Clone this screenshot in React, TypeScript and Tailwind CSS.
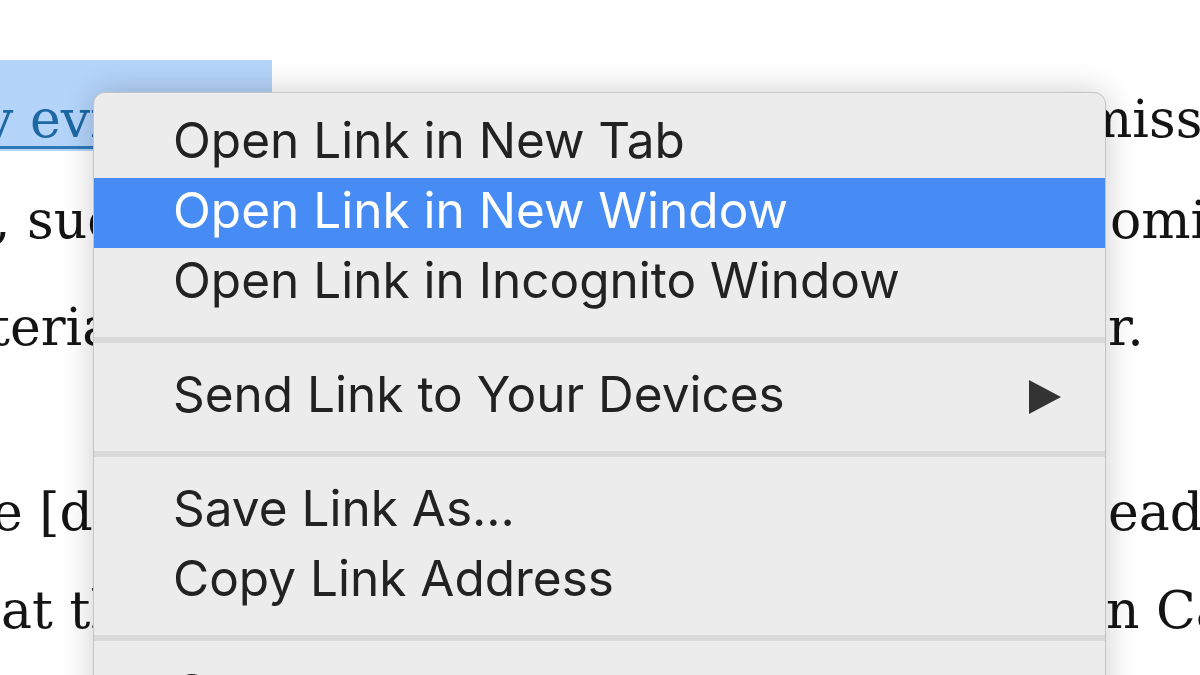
import React from 'react';

const serif = { fontFamily: '"DejaVu Serif", "Liberation Serif", serif' };

function MenuItem({ label, active, submenu }: { label: string; active?: boolean; submenu?: boolean }) {
  return (
    <div
      className={`flex h-[70px] items-center justify-between pb-[5px] pl-[79px] pr-[43px] ${
        active ? 'bg-[#478bf4] text-white' : 'text-[#222222]'
      }`}
    >
      <span className="whitespace-nowrap">{label}</span>
      {submenu && (
        <svg width="34" height="36" viewBox="0 0 34 36" className="mt-[5px]">
          <polygon points="1,1 33,18 1,35" fill="#333333" />
        </svg>
      )}
    </div>
  );
}

function Separator() {
  return <div className="my-[19px] h-[6px] bg-[#d9d9d9]" />;
}

export default function App() {
  return (
    <div className="relative h-[675px] w-[1200px] overflow-hidden bg-white">
      {/* article text behind the menu */}
      <div className="pt-[68px] text-[52px] leading-[102px] text-[#141414]" style={serif}>
        <div className="flex h-[101px] items-start whitespace-nowrap">
          <div className="-mt-[8px] flex h-[109px] w-[1106px] shrink-0 overflow-hidden">
            <div className="-ml-[16px] h-[91px] w-[288px] shrink-0 bg-[#b4d4fa] pt-[8px]">
              <span className="text-[#1c68a3] underline decoration-[#2f78b8] decoration-[3px] underline-offset-[9px]">
                y evil
              </span>
            </div>
            <span className="pt-[8px]">of the most recent</span>
          </div>
          <span className="-ml-[23px]">mission</span>
        </div>
        <div className="flex h-[107px] items-start whitespace-nowrap">
          <div className="w-[1106px] shrink-0 overflow-hidden">
            <span className="-ml-[6px] inline-block">, such as</span>
          </div>
          <span className="ml-[4px]">omi</span>
        </div>
        <div className="flex h-[185px] items-start whitespace-nowrap">
          <div className="w-[1106px] shrink-0 overflow-hidden">
            <span className="-ml-[11px] inline-block">terials</span>
          </div>
          <span className="ml-[2px]">r.</span>
        </div>
        <div className="flex h-[98px] items-start whitespace-nowrap">
          <div className="w-[1106px] shrink-0 overflow-hidden">
            <span className="-ml-[8px] inline-block">e [dis]</span>
          </div>
          <span className="ml-[2px]">ead</span>
        </div>
        <div className="flex h-[102px] items-start whitespace-nowrap">
          <div className="w-[1106px] shrink-0 overflow-hidden">
            <span className="ml-[1px] inline-block">at the</span>
          </div>
          <span>n Ca</span>
        </div>
      </div>

      {/* context menu */}
      <div
        className="absolute left-[93px] top-[92px] w-[1013px] rounded-t-[12px] border border-[#c4c4c4] bg-[#ececec] pt-[15px] text-[49.5px] shadow-[0_0_32px_rgba(0,0,0,0.2)]"
        style={{ fontFamily: 'Inter, "Noto Sans", "Liberation Sans", sans-serif' }}
      >
        <MenuItem label="Open Link in New Tab" />
        <MenuItem label="Open Link in New Window" active />
        <MenuItem label="Open Link in Incognito Window" />
        <Separator />
        <MenuItem label="Send Link to Your Devices" submenu />
        <Separator />
        <MenuItem label="Save Link As..." />
        <MenuItem label="Copy Link Address" />
        <Separator />
        <MenuItem label="Copy" />
        <MenuItem label="Search Google for “by evil”" />
        <MenuItem label="Print..." />
      </div>
    </div>
  );
}
